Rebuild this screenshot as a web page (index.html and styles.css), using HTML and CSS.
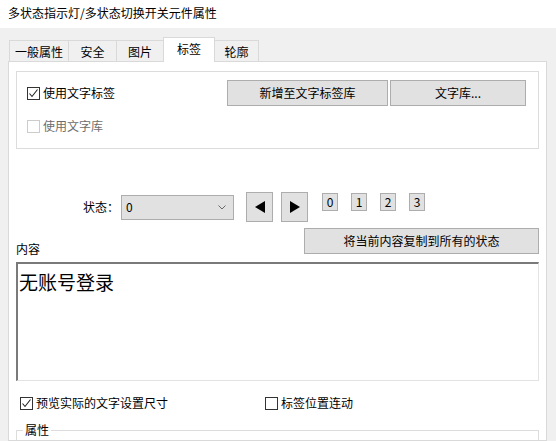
FILE: index.html
```html
<!DOCTYPE html>
<html>
<head>
<meta charset="utf-8">
<link rel="stylesheet" href="styles.css">
</head>
<body>
<div class="window">
  <div class="titlebar">多状态指示灯/多状态切换开关元件属性</div>
  <div class="tabstrip">
    <div class="tab t1">一般属性</div>
    <div class="tab t2">安全</div>
    <div class="tab t3">图片</div>
    <div class="tab t4 active">标签</div>
    <div class="tab t5">轮廓</div>
  </div>
  <div class="panel">
    <div class="groupbox">
      <div class="row1">
        <label class="check"><span class="box checked"><svg width="11" height="11" viewBox="0 0 11 11"><polyline points="1.5,5.5 4,8.5 9.5,1.5" fill="none" stroke="#222" stroke-width="1.1"/></svg></span>使用文字标签</label>
        <div class="btns">
          <div class="btn b-add">新增至文字标签库</div>
          <div class="btn b-lib">文字库...</div>
        </div>
      </div>
      <label class="check disabled"><span class="box"></span>使用文字库</label>
    </div>

    <div class="staterow">
      <span class="statelabel">状态：</span>
      <div class="select"><span>0</span><svg width="8" height="5" viewBox="0 0 8 5"><polyline points="0.5,0.5 4,4 7.5,0.5" fill="none" stroke="#6a6a6a" stroke-width="1"/></svg></div>
      <div class="btn arrow prev"><svg width="10" height="12" viewBox="0 0 10 12"><polygon points="10,0 10,12 0,6" fill="#000"/></svg></div>
      <div class="btn arrow next"><svg width="10" height="12" viewBox="0 0 10 12"><polygon points="0,0 0,12 10,6" fill="#000"/></svg></div>
      <div class="nums">
        <div class="btn num">0</div>
        <div class="btn num">1</div>
        <div class="btn num">2</div>
        <div class="btn num">3</div>
      </div>
    </div>

    <div class="copyrow">
      <span class="contentlabel">内容</span>
      <div class="btn b-copy">将当前内容复制到所有的状态</div>
    </div>

    <div class="textarea">无账号登录</div>

    <div class="optrow">
      <label class="check"><span class="box checked"><svg width="11" height="11" viewBox="0 0 11 11"><polyline points="1.5,5.5 4,8.5 9.5,1.5" fill="none" stroke="#222" stroke-width="1.1"/></svg></span>预览实际的文字设置尺寸</label>
      <label class="check second"><span class="box"></span>标签位置连动</label>
    </div>

    <fieldset class="props">
      <legend>属性</legend>
    </fieldset>
  </div>
</div>
</body>
</html>
```

FILE: styles.css
```css
* { box-sizing: border-box; }
html, body { margin: 0; padding: 0; }
body {
  width: 556px;
  height: 441px;
  overflow: hidden;
  background: #f0f0f0;
  font-family: "Noto Sans CJK SC", "Microsoft YaHei", sans-serif;
  font-size: 12px;
  line-height: 16px;
  color: #000;
}
.window { display: flex; flex-direction: column; height: 441px; }
.titlebar {
  flex-shrink: 0;
  height: 28px;
  background: #fff;
  padding-left: 8px;
  font-size: 12px;
  line-height: 26px;
  color: #000;
}
.tabstrip {
  flex-shrink: 0;
  height: 33px;
  display: flex;
  align-items: flex-end;
  padding-left: 9px;
}
.tab {
  height: 21px;
  border: 1px solid #d9d9d9;
  border-bottom: none;
  background: #f0f0f0;
  text-align: center;
  line-height: 21px;
  margin-left: -1px;
}
.t1 { width: 60px; margin-left: 0; }
.t2 { width: 49px; }
.t3 { width: 48px; }
.t4 { width: 52px; }
.t5 { width: 45px; }
.tab.active {
  height: 25px;
  background: #fff;
  margin-bottom: -1px;
  position: relative;
  z-index: 1;
  line-height: 21px;
}
.panel {
  margin-left: 8px;
  width: 539px;
  flex: 1 1 auto;
  min-height: 0;
  overflow: hidden;
  background: #fff;
  border: 1px solid #d9d9d9;
  padding: 9px 7px 0 7px;
}
.groupbox {
  height: 78px;
  border: 1px solid #dcdcdc;
  padding: 8px 12px 0 10px;
}
.row1 {
  display: flex;
  justify-content: space-between;
  align-items: center;
  height: 26px;
}
.btns { display: flex; gap: 2px; }
.btn {
  background: #e1e1e1;
  border: 1px solid #adadad;
  display: flex;
  align-items: center;
  justify-content: center;
  color: #000;
}
.b-add { width: 161px; height: 26px; }
.b-lib { width: 136px; height: 26px; }
.check {
  display: flex;
  align-items: center;
  height: 16px;
  gap: 3px;
}
.box {
  width: 13px;
  height: 13px;
  border: 1px solid #333;
  background: #fff;
  display: flex;
  align-items: center;
  justify-content: center;
}
.check.disabled { color: #6d6d6d; margin-top: 12px; }
.check.disabled .box { border-color: #cccccc; }

.staterow {
  display: flex;
  align-items: center;
  height: 30px;
  margin-top: 43px;
  padding-left: 67px;
}
.statelabel { width: 38px; }
.select {
  width: 113px;
  height: 25px;
  background: #e1e1e1;
  border: 1px solid #adadad;
  display: flex;
  align-items: center;
  justify-content: space-between;
  padding: 0 7px 0 4px;
  margin-right: 12px;
}
.arrow { width: 27px; height: 30px; }
.prev { margin-right: 8px; }
.next { margin-right: 14px; }
.nums { display: flex; gap: 13px; align-self: flex-start; margin-top: 1px; }
.num { width: 16px; height: 18px; }

.copyrow {
  display: flex;
  justify-content: space-between;
  align-items: flex-end;
  margin-top: 6px;
  height: 26px;
}
.contentlabel { margin-bottom: -3px; }
.b-copy { width: 235px; height: 26px; }

.textarea {
  margin-top: 8px;
  height: 119px;
  border-top: 2px solid #7a7a7a;
  border-left: 2px solid #7a7a7a;
  border-right: 1px solid #e3e3e3;
  border-bottom: 1px solid #e3e3e3;
  padding: 6px 1px;
  font-size: 19px;
  line-height: 24px;
}

.optrow {
  display: flex;
  margin-top: 14px;
  padding-left: 4px;
}
.optrow .check { width: 245px; }

.props {
  margin: 11px 0 0 0;
  padding: 0;
  height: 40px;
  border: 1px solid #dcdcdc;
}
.props legend {
  margin-left: 6px;
  padding: 0 2px;
  line-height: 16px;
}
```
